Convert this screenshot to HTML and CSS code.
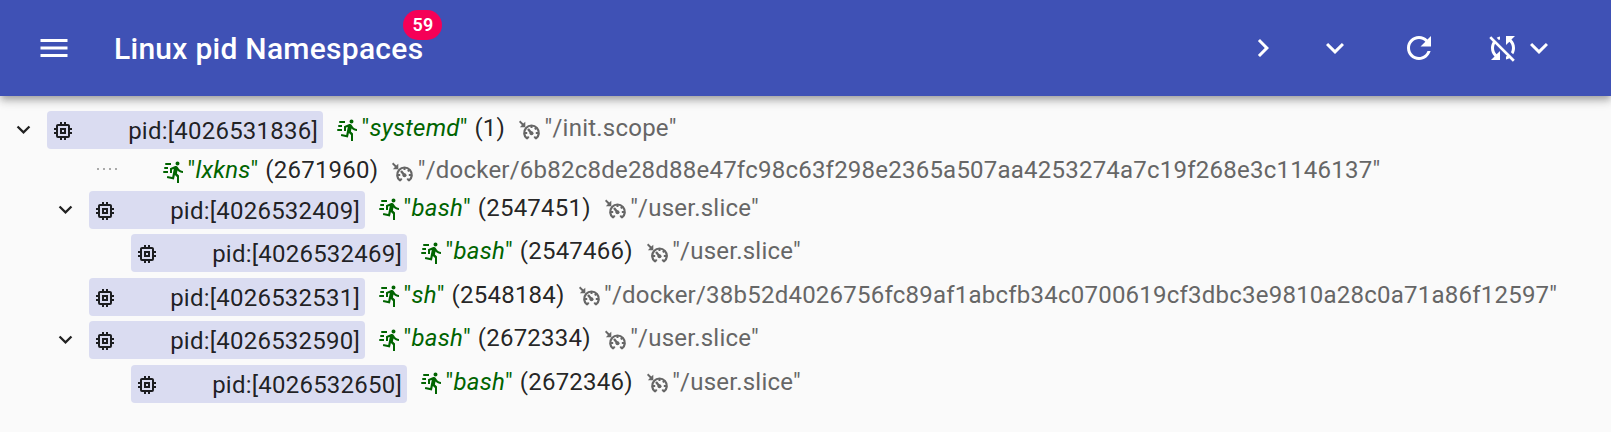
FILE: index.html
```
<!DOCTYPE html>
<html lang="en">
<head>
<meta charset="utf-8">
<title>Linux pid Namespaces</title>
<link rel="stylesheet" href="styles.css">
</head>
<body>
<svg class="defs" aria-hidden="true">
  <symbol id="menu" viewBox="0 0 24 24"><path d="M3 18h18v-2H3v2zm0-5h18v-2H3v2zm0-7v2h18V6H3z"/></symbol>
  <symbol id="right" viewBox="0 0 24 24"><path d="M10 6L8.59 7.41 13.17 12l-4.58 4.59L10 18l6-6z"/></symbol>
  <symbol id="down" viewBox="0 0 24 24"><path d="M16.59 8.59L12 13.17 7.41 8.59 6 10l6 6 6-6z"/></symbol>
  <symbol id="refresh" viewBox="0 0 24 24"><path d="M17.65 6.35C16.2 4.9 14.21 4 12 4c-4.42 0-7.99 3.58-7.99 8s3.57 8 7.99 8c3.73 0 6.84-2.55 7.73-6h-2.08c-.82 2.33-3.04 4-5.65 4-3.31 0-6-2.69-6-6s2.69-6 6-6c1.66 0 3.14.69 4.22 1.78L13 11h7V4l-2.35 2.35z"/></symbol>
  <symbol id="nosync" viewBox="0 0 24 24"><path d="M10 6.35V4.26c-.8.21-1.55.54-2.23.96l1.46 1.46c.25-.12.5-.24.77-.33zm-7.14-.94l2.36 2.36C4.45 8.99 4 10.44 4 12c0 2.21.91 4.2 2.36 5.64L4 20h6v-6l-2.24 2.24C6.68 15.15 6 13.66 6 12c0-1 .25-1.94.68-2.77l8.08 8.08c-.25.13-.5.25-.77.34v2.09c.8-.21 1.55-.54 2.23-.96l2.36 2.36 1.27-1.27L4.14 4.14 2.86 5.41zM20 4h-6v6l2.24-2.24C17.32 8.85 18 10.34 18 12c0 1-.25 1.94-.68 2.77l1.46 1.46C19.55 15.01 20 13.56 20 12c0-2.21-.91-4.2-2.36-5.64L20 4z"/></symbol>
  <symbol id="chip" viewBox="0 0 24 24"><path d="M17,17H7V7H17M21,11V9H19V7C19,5.89 18.1,5 17,5H15V3H13V5H11V3H9V5H7C5.89,5 5,5.89 5,7V9H3V11H5V13H3V15H5V17A2,2 0 0,0 7,19H9V21H11V19H13V21H15V19H17A2,2 0 0,0 19,17V15H21V13H19V11M13,13H11V11H13M15,9H9V15H15V9Z"/></symbol>
  <symbol id="run" viewBox="0 0 24 24"><path d="M16.5,5.5A2,2 0 0,0 18.5,3.5A2,2 0 0,0 16.5,1.5A2,2 0 0,0 14.5,3.5A2,2 0 0,0 16.5,5.5M12.9,19.4L13.9,15L16,17V23H18V15.5L15.9,13.5L16.5,10.5C17.89,12.09 19.89,13 22,13V11C20.24,11.03 18.6,10.11 17.7,8.6L16.7,7C16.34,6.4 15.7,6 15,6C14.7,6 14.5,6.1 14.2,6.1L9,8.3V13H11V9.6L12.8,8.9L11.2,17L6.3,16L5.9,18L12.9,19.4M4,9A1,1 0 0,1 3,8A1,1 0 0,1 4,7H7V9H4M5,5A1,1 0 0,1 4,4A1,1 0 0,1 5,3H10V5H5M3,13A1,1 0 0,1 2,12A1,1 0 0,1 3,11H7V13H3Z"/></symbol>
  <symbol id="cruise" viewBox="0 0 24 24"><path d="M2.200 2.500L5.300 5.600 7.300 3.800V9.200H1.900L3.900 7.100 1 4z"/><g fill="none" stroke="currentColor" stroke-width="2.200"><path d="M9.200 20.700A7.300 7.300 0 1 1 17.800 20.700"/><path stroke-width="2" d="M6.500 15h2.700M17.800 15h2.700M18.300 9.900l-1.500 1.500M13.500 7.500v2.600M8.900 20.900l1.800-2.400M18.100 20.900l-1.800-2.400"/><path stroke-width="2.400" d="M10 11L13.500 15.200"/></g><circle cx="13.500" cy="15.200" r="2"/></symbol>
</svg>
<header class="bar">
  <svg class="icon menu"><use href="#menu"/></svg>
  <h1 class="title">Linux pid Namespaces<span class="badge">59</span></h1>
  <nav class="actions">
    <span class="button"><svg class="icon"><use href="#right"/></svg></span>
    <span class="button"><svg class="icon"><use href="#down"/></svg></span>
    <span class="button spaced"><svg class="icon"><use href="#refresh"/></svg></span>
    <span class="button split"><svg class="icon"><use href="#nosync"/></svg><svg class="icon"><use href="#down"/></svg></span>
  </nav>
</header>
<main class="tree">
  <div class="row">
    <span class="toggle"><svg><use href="#down"/></svg></span>
    <span class="pill"><svg class="small"><use href="#chip"/></svg>pid:[4026531836]</span>
    <span class="process"><svg class="small run"><use href="#run"/></svg><span class="name">"<i>systemd</i>"</span> (1)</span>
    <span class="group"><svg class="small"><use href="#cruise"/></svg>"/init.scope"</span>
  </div>
  <div class="row leaf">
    <span class="dots"></span>
    <span class="process"><svg class="small run"><use href="#run"/></svg><span class="name">"<i>lxkns</i>"</span> (2671960)</span>
    <span class="group"><svg class="small"><use href="#cruise"/></svg>"/docker/6b82c8de28d88e47fc98c63f298e2365a507aa4253274a7c19f268e3c1146137"</span>
  </div>
  <div class="row child">
    <span class="toggle"><svg><use href="#down"/></svg></span>
    <span class="pill"><svg class="small"><use href="#chip"/></svg>pid:[4026532409]</span>
    <span class="process"><svg class="small run"><use href="#run"/></svg><span class="name">"<i>bash</i>"</span> (2547451)</span>
    <span class="group"><svg class="small"><use href="#cruise"/></svg>"/user.slice"</span>
  </div>
  <div class="row grandchild">
    <span class="toggle"></span>
    <span class="pill"><svg class="small"><use href="#chip"/></svg>pid:[4026532469]</span>
    <span class="process"><svg class="small run"><use href="#run"/></svg><span class="name">"<i>bash</i>"</span> (2547466)</span>
    <span class="group"><svg class="small"><use href="#cruise"/></svg>"/user.slice"</span>
  </div>
  <div class="row child">
    <span class="toggle"></span>
    <span class="pill"><svg class="small"><use href="#chip"/></svg>pid:[4026532531]</span>
    <span class="process"><svg class="small run"><use href="#run"/></svg><span class="name">"<i>sh</i>"</span> (2548184)</span>
    <span class="group"><svg class="small"><use href="#cruise"/></svg>"/docker/38b52d4026756fc89af1abcfb34c0700619cf3dbc3e9810a28c0a71a86f12597"</span>
  </div>
  <div class="row child">
    <span class="toggle"><svg><use href="#down"/></svg></span>
    <span class="pill"><svg class="small"><use href="#chip"/></svg>pid:[4026532590]</span>
    <span class="process"><svg class="small run"><use href="#run"/></svg><span class="name">"<i>bash</i>"</span> (2672334)</span>
    <span class="group"><svg class="small"><use href="#cruise"/></svg>"/user.slice"</span>
  </div>
  <div class="row grandchild">
    <span class="toggle"></span>
    <span class="pill"><svg class="small"><use href="#chip"/></svg>pid:[4026532650]</span>
    <span class="process"><svg class="small run"><use href="#run"/></svg><span class="name">"<i>bash</i>"</span> (2672346)</span>
    <span class="group"><svg class="small"><use href="#cruise"/></svg>"/user.slice"</span>
  </div>
</main>
</body>
</html>
```
FILE: styles.css
```
* { box-sizing: border-box; }
html, body { height: 100%; }
body {
  margin: 0;
  overflow: hidden;
  background: #fafafa;
  color: rgba(0, 0, 0, 0.87);
  font: 400 24px/36px Roboto, sans-serif;
  letter-spacing: 0.00938em;
}
svg { display: block; flex: none; fill: currentColor; }
.defs { position: absolute; width: 0; height: 0; }

.bar {
  position: relative;
  display: flex;
  align-items: center;
  height: 96px;
  padding: 0 45px 0 36px;
  background: #3f51b5;
  color: #fff;
  box-shadow: 0 3px 6px -1.5px rgba(0, 0, 0, 0.2), 0 6px 7.5px rgba(0, 0, 0, 0.14), 0 1.5px 15px rgba(0, 0, 0, 0.12);
}
.icon { width: 36px; height: 36px; }
.title {
  position: relative;
  margin: 2px 0 0 42px;
  font-size: 30px;
  font-weight: 500;
  line-height: 48px;
  letter-spacing: 0.009em;
}
.badge {
  position: absolute;
  top: -15px;
  right: -19px;
  height: 30px;
  padding: 0 9px;
  border-radius: 15px;
  background: #f50057;
  font-size: 18px;
  font-weight: 600;
  line-height: 30px;
  letter-spacing: 0.00938em;
}
.actions { display: flex; margin-left: auto; }
.button { display: flex; padding: 18px; }
.spaced { margin-left: 12px; }
.split { padding: 18px 9px 18px 30px; }

.tree { padding-top: 15px; }
.row { display: flex; height: 43.5px; white-space: pre; }
.child { padding-left: 42px; }
.grandchild { padding-left: 84px; }
.toggle { width: 47px; padding: 5px 0 0 10px; }
.toggle svg { width: 27px; height: 27px; }
.small { width: 24px; height: 24px; }
.pill {
  display: flex;
  justify-content: space-between;
  width: 276px;
  height: 38px;
  padding: 2px 5px 0 4px;
  border-radius: 4px;
  background: #dadcf1;
}
.pill .small { margin-top: 6px; }
.process { display: flex; height: 36px; margin: -1px 0 0 12px; }
.process .small, .group .small { margin-top: 7.5px; }
.run, .name { color: #006400; }
.name { margin-right: 0.7px; }
.run { margin-right: 2.6px; }
.group { display: flex; height: 36px; margin: -1px 0 0 13px; color: #666; }
.group .small { margin-right: 2.4px; }
.leaf { height: 36px; padding-left: 97px; }
.leaf .process, .leaf .group { margin-top: -2.5px; }
.dots {
  width: 20px;
  height: 2px;
  margin: 13px 32px 0 0;
  background: repeating-linear-gradient(90deg, #aaa 0 2px, transparent 2px 6px);
}
```
